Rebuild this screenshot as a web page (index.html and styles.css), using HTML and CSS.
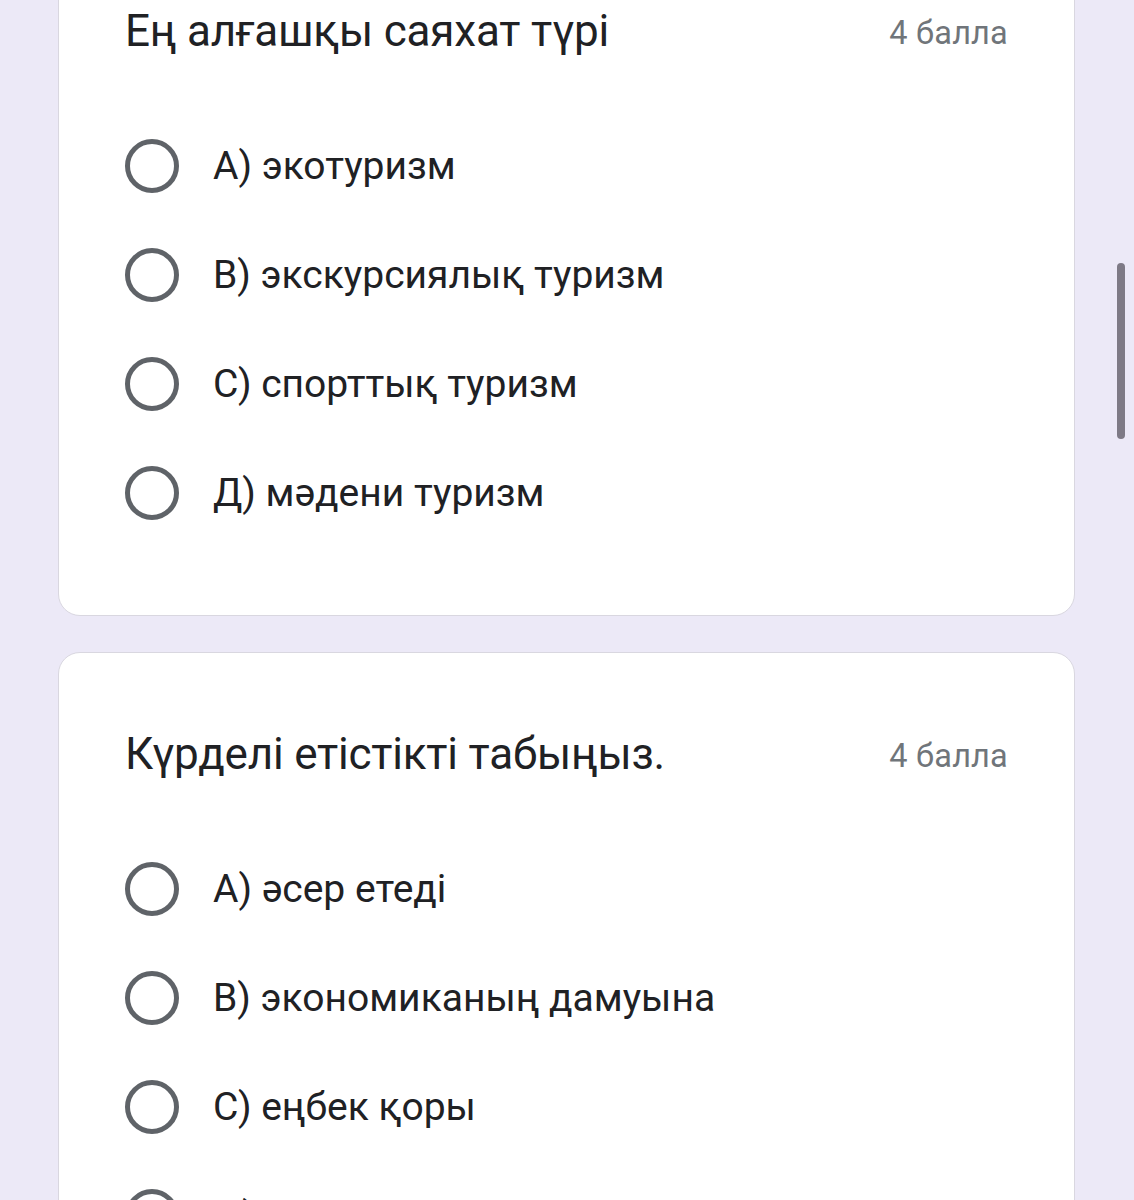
FILE: index.html
```html
<!DOCTYPE html>
<html lang="kk">
<head>
<meta charset="utf-8">
<link rel="stylesheet" href="styles.css">
</head>
<body>
<div class="page">
  <section class="card card-first">
    <div class="q-head">
      <h2 class="q-title">Ең алғашқы саяхат түрі</h2>
      <span class="q-points">4 балла</span>
    </div>
    <ul class="options">
      <li class="option"><span class="radio"></span><span class="label">А) экотуризм</span></li>
      <li class="option"><span class="radio"></span><span class="label">В) экскурсиялық туризм</span></li>
      <li class="option"><span class="radio"></span><span class="label">С) спорттық туризм</span></li>
      <li class="option"><span class="radio"></span><span class="label">Д) мәдени туризм</span></li>
    </ul>
  </section>
  <section class="card">
    <div class="q-head">
      <h2 class="q-title">Күрделі етістікті табыңыз.</h2>
      <span class="q-points">4 балла</span>
    </div>
    <ul class="options">
      <li class="option"><span class="radio"></span><span class="label">А) әсер етеді</span></li>
      <li class="option"><span class="radio"></span><span class="label">В) экономиканың дамуына</span></li>
      <li class="option"><span class="radio"></span><span class="label">С) еңбек қоры</span></li>
      <li class="option"><span class="radio"></span><span class="label">Д) қызмет етеді</span></li>
    </ul>
  </section>
</div>
<div class="scrollbar"></div>
</body>
</html>
```

FILE: styles.css
```css
html, body {
  margin: 0;
  padding: 0;
}
body {
  background: #ece9f7;
  font-family: Roboto, "Noto Sans", "Liberation Sans", sans-serif;
  color: #202124;
  height: 1200px;
  overflow: hidden;
}
.page {
  padding-left: 58px;
  width: 1017px;
  display: flex;
  flex-direction: column;
  gap: 36px;
}
.card {
  background: #ffffff;
  border: 1.5px solid #d9d7e0;
  border-radius: 22px;
  padding: 77px 66px 68px 66px;
}
.card-first {
  margin-top: -71px;
}
.q-head {
  display: flex;
  justify-content: space-between;
  align-items: center;
}
.q-title {
  margin: 0;
  font-weight: 400;
  font-size: 44px;
  letter-spacing: -0.2px;
  line-height: 48px;
  color: #202124;
}
.q-points {
  font-size: 32.5px;
  letter-spacing: 0.2px;
  color: #70757a;
  padding-top: 4px;
}
.options {
  list-style: none;
  margin: 56px 0 0 0;
  padding: 0;
}
.option {
  height: 109px;
  display: flex;
  align-items: center;
  gap: 34px;
}
.radio {
  width: 44px;
  height: 44px;
  border: 5px solid #5f6368;
  border-radius: 50%;
  flex: none;
}
.label {
  font-size: 39px;
  color: #202124;
}
.scrollbar {
  position: fixed;
  left: 1117px;
  top: 263px;
  width: 8px;
  height: 176px;
  border-radius: 4px;
  background: #7e7a86;
}
```
